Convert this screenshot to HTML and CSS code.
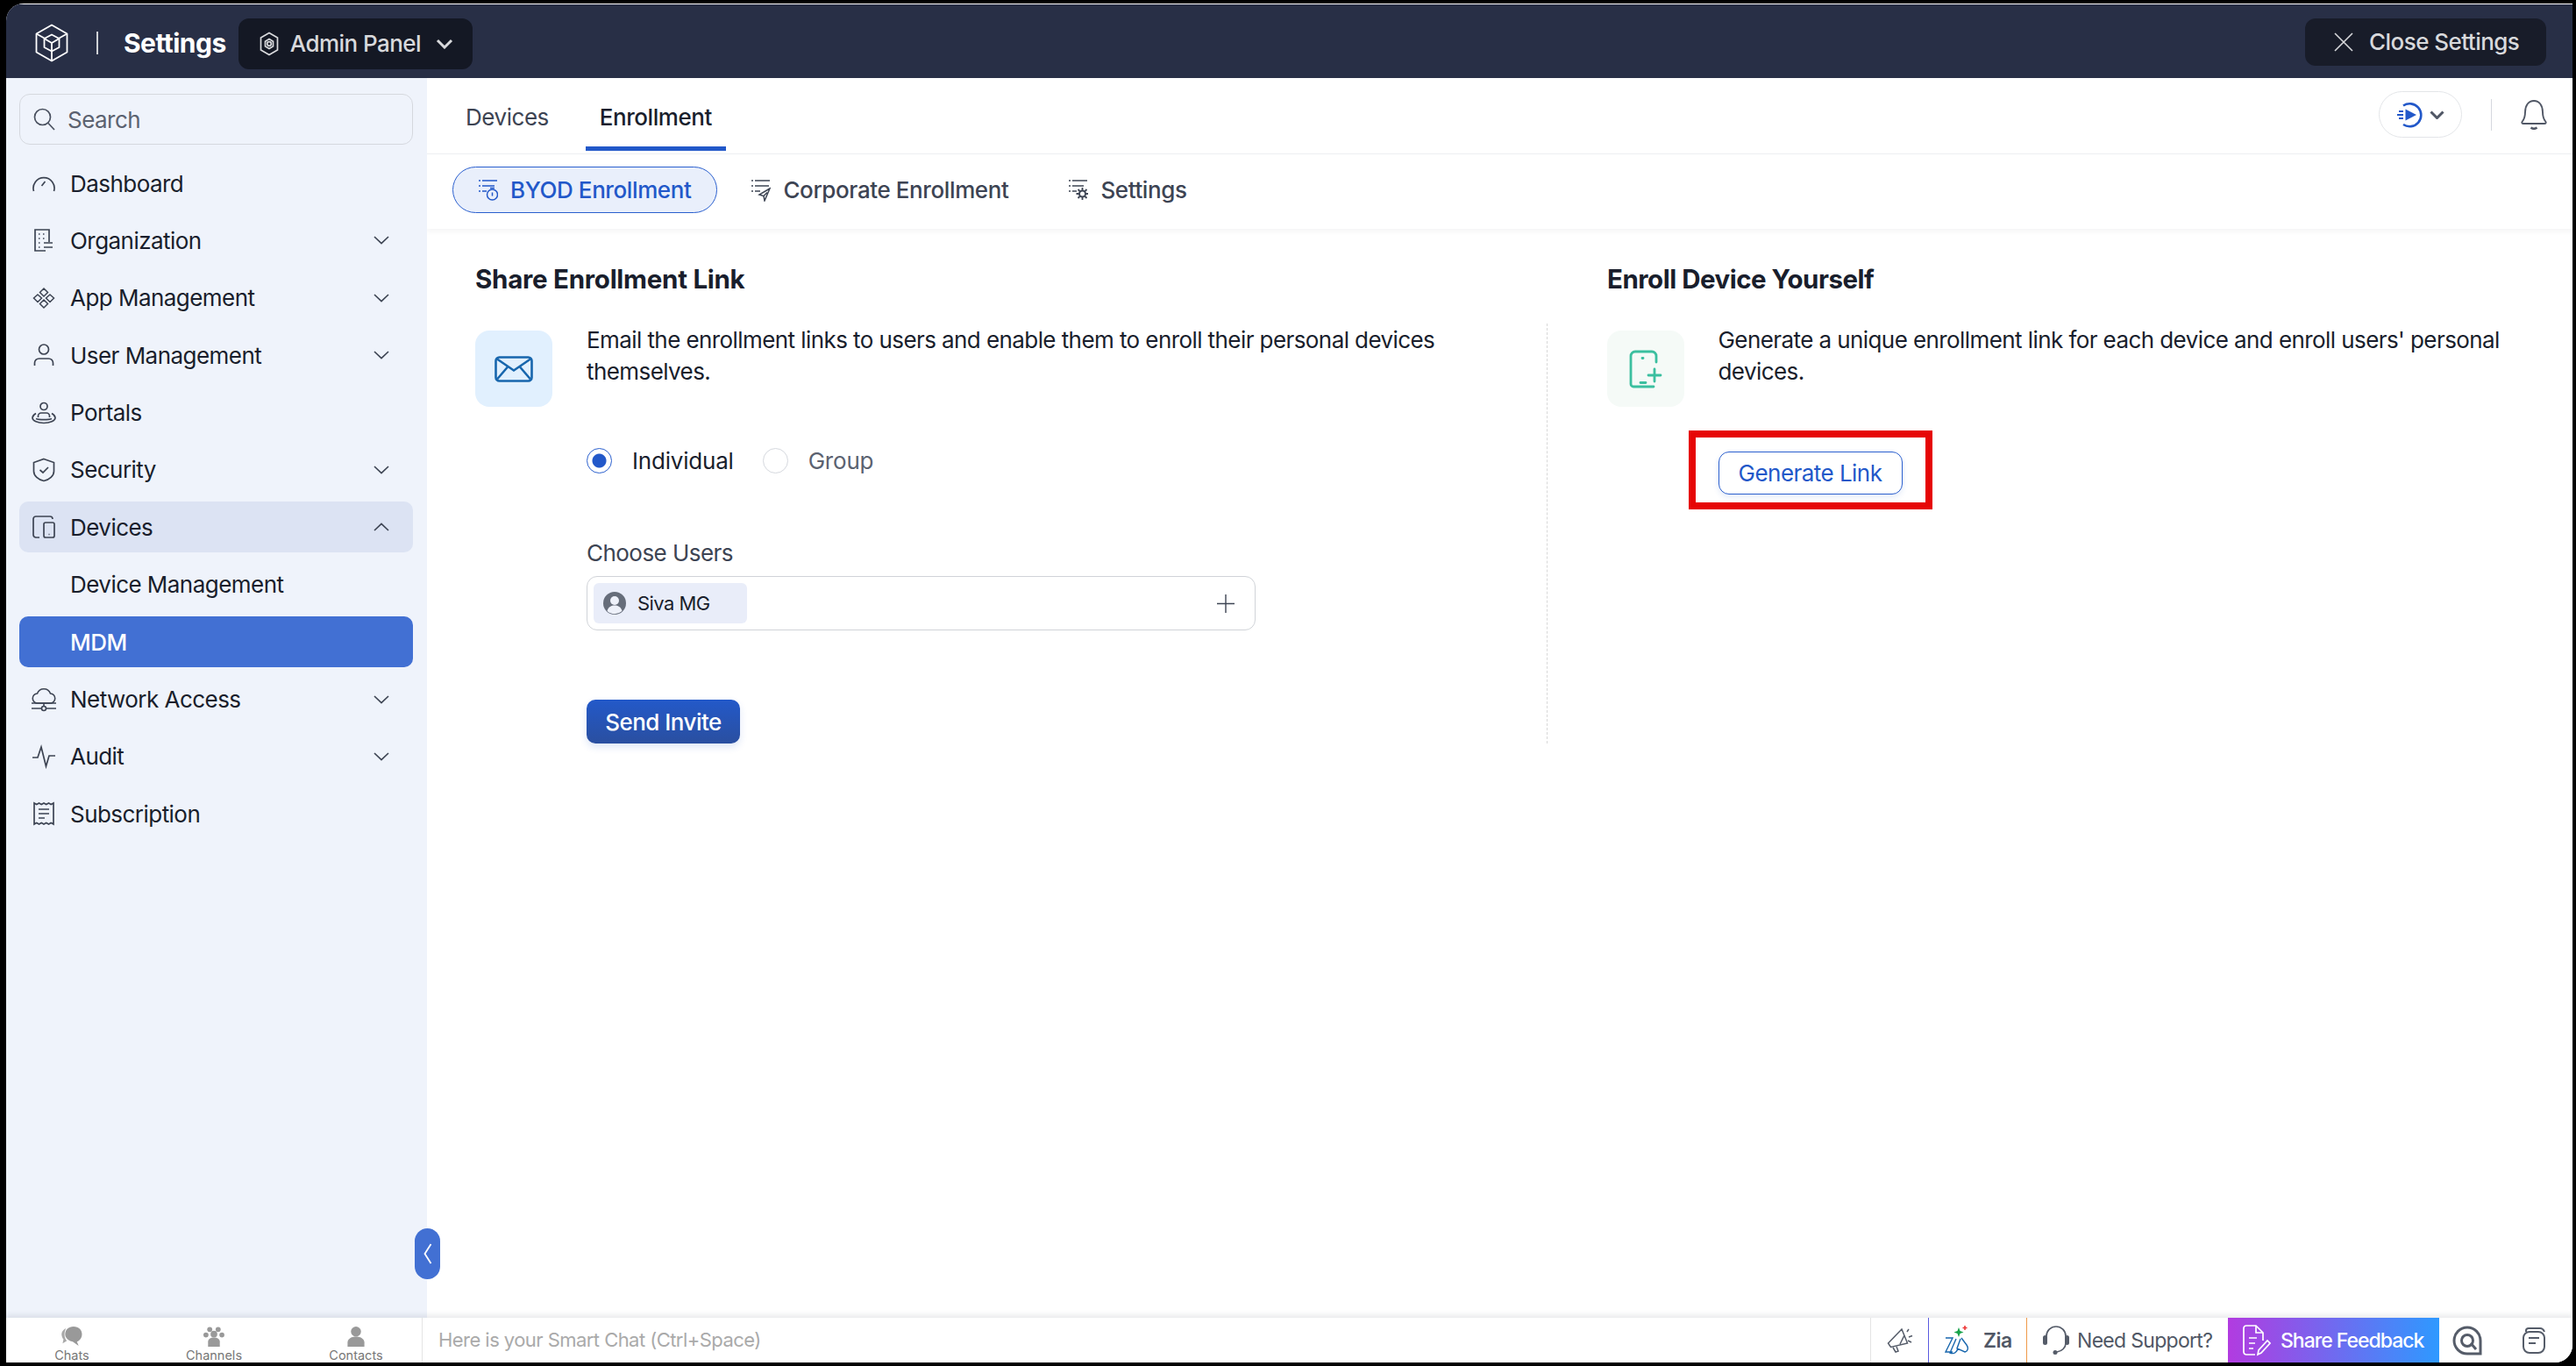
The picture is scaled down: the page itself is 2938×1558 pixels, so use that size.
FILE: index.html
```html
<!DOCTYPE html>
<html lang="en">
<head>
<meta charset="utf-8">
<title>Settings</title>
<link rel="stylesheet" href="styles.css">
</head>
<body>
<div class="window">
  <header class="topbar">
    <svg class="logo" viewBox="0 0 38 44" fill="none" stroke="#fff" stroke-width="1.8" stroke-linejoin="round"><path d="M19 1.5 36.5 11.5v21L19 42.5 1.5 32.5v-21z"/><path d="M1.5 11.5 10.500 16.500M36.500 11.500 27.500 16.500M19 31.500v11"/><path d="M19 12.500l8.500 4.500v10L19 31.500l-8.500-4.500V17z"/><path d="M10.500 17 19 22l8.500-5M19 22v9.500"/></svg>
    <span class="topbar-sep"></span>
    <span class="topbar-title">Settings</span>
    <button class="admin-chip">
      <svg class="admin-icon" viewBox="0 0 22 28" fill="none" stroke="#d8d9dc" stroke-width="1.7"><path d="M11 1.500 20.500 7v14L11 26.500 1.500 21V7z"/><circle cx="11" cy="14" r="2.300"/><path d="M11 8.500l4.500 2.700v5.600L11 19.500l-4.500-2.700v-5.600z"/></svg>
      <span>Admin Panel</span>
      <svg class="admin-chevron" viewBox="0 0 20 12" fill="none" stroke="#d8d9dc" stroke-width="3"><path d="M2 2l8 8 8-8"/></svg>
    </button>
    <button class="close-btn">
      <svg class="close-icon" viewBox="0 0 22 22" fill="none" stroke="#d8d9dc" stroke-width="1.600"><path d="M1 1l20 20M21 1 1 21"/></svg>
      <span>Close Settings</span>
    </button>
  </header>

  <div class="middle">
    <aside class="sidebar">
      <div class="search">
        <svg class="search-icon" viewBox="0 0 25 26" fill="none" stroke="#4a5160" stroke-width="1.700"><circle cx="10.500" cy="10.500" r="9"/><path d="M17 17.500l7 7.500"/></svg>
        <span>Search</span>
      </div>
      <nav class="nav">
        <a class="nav-item"><svg class="nav-icon" viewBox="0 0 28 28" fill="none" stroke="#3d4453" stroke-width="1.700"><path d="M2.500 23a12 12 0 1 1 23 0"/><path d="M11.500 17l4-5"/></svg><span>Dashboard</span></a>
        <a class="nav-item"><svg class="nav-icon" viewBox="0 0 28 28" fill="none" stroke="#3d4453" stroke-width="1.700"><path d="M16 26H4V2h16v14"/><path d="M8 7h1.500M13 7h1.500M8 12h1.500M13 12h1.500M8 17h1.500M8 22h1.500M14 17h10M14 22h10"/></svg><span>Organization</span><svg class="nav-chevron" viewBox="0 0 18 10" fill="none" stroke="#3d4453" stroke-width="1.700"><path d="M1 1l8 7.500L17 1"/></svg></a>
        <a class="nav-item"><svg class="nav-icon" viewBox="0 0 28 28" fill="none" stroke="#3d4453" stroke-width="1.500"><path d="M14 3l4.500 4.500L14 12 9.500 7.500zM7 10l4.500 4L7 18.500 2.500 14zM21 10l4.500 4-4.500 4.500-4.500-4.500zM14 16l4.500 4.500L14 25l-4.500-4.500z"/></svg><span>App Management</span><svg class="nav-chevron" viewBox="0 0 18 10" fill="none" stroke="#3d4453" stroke-width="1.700"><path d="M1 1l8 7.500L17 1"/></svg></a>
        <a class="nav-item"><svg class="nav-icon" viewBox="0 0 28 28" fill="none" stroke="#3d4453" stroke-width="1.700"><circle cx="14" cy="7.500" r="5.500"/><path d="M3.500 26v-3a5 5 0 0 1 5-5h11a5 5 0 0 1 5 5v3"/></svg><span>User Management</span><svg class="nav-chevron" viewBox="0 0 18 10" fill="none" stroke="#3d4453" stroke-width="1.700"><path d="M1 1l8 7.500L17 1"/></svg></a>
        <a class="nav-item"><svg class="nav-icon" viewBox="0 0 28 28" fill="none" stroke="#3d4453" stroke-width="1.700"><circle cx="14" cy="6.500" r="4"/><path d="M7.500 19v-1.500a3.500 3.500 0 0 1 3.500-3.500h6a3.500 3.500 0 0 1 3.500 3.500V19"/><path d="M5 14.500C2.500 16 1 17.500 1 19.500 1 23 7 25.500 14 25.500S27 23 27 19.500c0-2-1.500-3.500-4-5M5 20.500c3 1.500 15 1.500 18 0"/></svg><span>Portals</span></a>
        <a class="nav-item"><svg class="nav-icon" viewBox="0 0 28 28" fill="none" stroke="#3d4453" stroke-width="1.700"><path d="M14 1.500 25.500 5.500v10c0 5-5 9.500-11.500 11-6.500-1.500-11.500-6-11.500-11v-10z"/><path d="M9.500 14l3.500 3 6-6"/></svg><span>Security</span><svg class="nav-chevron" viewBox="0 0 18 10" fill="none" stroke="#3d4453" stroke-width="1.700"><path d="M1 1l8 7.500L17 1"/></svg></a>
        <a class="nav-item nav-open"><svg class="nav-icon" viewBox="0 0 28 28" fill="none" stroke="#3d4453" stroke-width="1.700"><path d="M9 26H5a3 3 0 0 1-3-3V5a3 3 0 0 1 3-3h16a3 3 0 0 1 3 3"/><rect x="14" y="9" width="12" height="17" rx="2"/><path d="M19.500 22.500h1"/></svg><span>Devices</span><svg class="nav-chevron" viewBox="0 0 18 10" fill="none" stroke="#3d4453" stroke-width="1.700"><path d="M1 9l8-7.500L17 9"/></svg></a>
        <a class="nav-item"><span class="nav-sub">Device Management</span></a>
        <a class="nav-item nav-active"><span class="nav-sub">MDM</span></a>
        <a class="nav-item"><svg class="nav-icon" viewBox="0 0 28 28" fill="none" stroke="#3d4453" stroke-width="1.600"><path d="M7 18a5.500 5.500 0 0 1-.5-11 8 8 0 0 1 15 0 5.500 5.500 0 0 1-.5 11z"/><path d="M14 18v4M0 18h28M0 24h11M17 24h11"/><circle cx="14" cy="24" r="2.500"/></svg><span>Network Access</span><svg class="nav-chevron" viewBox="0 0 18 10" fill="none" stroke="#3d4453" stroke-width="1.700"><path d="M1 1l8 7.500L17 1"/></svg></a>
        <a class="nav-item"><svg class="nav-icon" viewBox="0 0 28 28" fill="none" stroke="#3d4453" stroke-width="1.700"><path d="M1 15h6l4-12 5.500 22 3.500-12h7"/></svg><span>Audit</span><svg class="nav-chevron" viewBox="0 0 18 10" fill="none" stroke="#3d4453" stroke-width="1.700"><path d="M1 1l8 7.500L17 1"/></svg></a>
        <a class="nav-item"><svg class="nav-icon" viewBox="0 0 28 28" fill="none" stroke="#3d4453" stroke-width="1.700"><path d="M3 2v24l2.750-1.500 2.750 1.500 2.750-1.500L14 26l2.750-1.500 2.750 1.500 2.750-1.500L25 26V2l-2.750 1.500L19.500 2l-2.750 1.500L14 2l-2.750 1.500L8.500 2 5.750 3.500z"/><path d="M8 9h12M8 14h12M8 19h7"/></svg><span>Subscription</span></a>
      </nav>
      <button class="collapse"><svg viewBox="0 0 10 26" fill="none" stroke="#fff" stroke-width="1.800"><path d="M8.500 2 1.500 13l7 11"/></svg></button>
    </aside>

    <main class="main">
      <div class="tabs">
        <a class="tab">Devices</a>
        <a class="tab tab-active">Enrollment</a>
        <div class="tabs-right">
          <button class="play-pill">
            <svg class="play-icon" viewBox="0 0 30 30" fill="none" stroke="#2258c9" stroke-width="2.600"><path d="M8 4.500A13 13 0 1 1 8 26"/><path d="M10.500 8.500 23 15l-12.500 6.500z" fill="#2258c9" stroke="none"/><path d="M3 11h5M1 15h7M3 19h5" stroke-width="1.800"/></svg>
            <svg class="play-chevron" viewBox="0 0 17 10" fill="none" stroke="#505765" stroke-width="3"><path d="M1.500 1.500l7 7 7-7"/></svg>
          </button>
          <span class="tabs-sep"></span>
          <svg class="bell" viewBox="0 0 30 35" fill="none" stroke="#505765" stroke-width="1.900"><path d="M1.500 26c2.500-3 3.500-5 3.500-11C5 7 9 2 15 2s10 5 10 13c0 6 1 8 3.500 11 .5 1 0 2-1.500 2H3c-1.500 0-2-1-1.500-2z"/><path d="M11.500 32.500c2 1.500 5 1.500 7 0" stroke-width="2.500"/></svg>
        </div>
      </div>

      <div class="subtabs">
        <a class="subtab subtab-active">
          <svg class="subtab-icon" viewBox="0 0 22 26" fill="none" stroke="#2258c9" stroke-width="1.500"><path d="M4 2h17M4 8h14M4 14h5M0 2h2M0 8h2M0 14h2" /><circle cx="15.500" cy="18" r="6"/><path d="M15.500 15.500v4M13 10.500h5"/></svg>
          <span>BYOD Enrollment</span>
        </a>
        <a class="subtab">
          <svg class="subtab-icon" viewBox="0 0 22 26" fill="none" stroke="#3d4453" stroke-width="1.500"><path d="M4 2h17M4 8h16M4 14h6M0 2h2M0 8h2M0 14h2"/><path d="M21 11 9 18l5 1.500 1 5.500 6-14zM14 19.500l4-4"/></svg>
          <span>Corporate Enrollment</span>
        </a>
        <a class="subtab">
          <svg class="subtab-icon" viewBox="0 0 22 26" fill="none" stroke="#3d4453" stroke-width="1.500"><path d="M4 2h17M4 8h13M4 14h5M0 2h2M0 8h2M0 14h2"/><circle cx="15.500" cy="17" r="3.500" stroke-width="2"/><path d="M15.500 10v3M15.500 21v3M8.500 17h3M19.500 17h3M10.500 12l2 2M18.500 20l2 2M20.500 12l-2 2M12.500 20l-2 2" stroke-width="1.800"/></svg>
          <span>Settings</span>
        </a>
      </div>

      <div class="content">
        <h2 class="heading">Share Enrollment Link</h2>
        <h2 class="heading heading-right">Enroll Device Yourself</h2>

        <section class="panel">
          <div class="desc-row">
            <div class="tile tile-blue">
              <svg class="mail-icon" viewBox="0 0 44 30" fill="none" stroke="#1766ad" stroke-width="2.600"><rect x="1.500" y="1.500" width="41" height="27" rx="4"/><path d="M3 3.500l19 13 19-13M3 26.500l12-14M41 26.500l-12-14"/></svg>
            </div>
            <p class="desc">Email the enrollment links to users and enable them to enroll their personal devices themselves.</p>
          </div>
          <div class="form">
            <div class="radios">
              <label class="radio"><span class="radio-mark radio-on"></span><span class="radio-label-on">Individual</span></label>
              <label class="radio"><span class="radio-mark"></span><span class="radio-label-off">Group</span></label>
            </div>
            <div class="field-label">Choose Users</div>
            <div class="field">
              <span class="chip">
                <svg class="avatar" viewBox="0 0 26 26"><circle cx="13" cy="13" r="13" fill="#666d7a"/><circle cx="13" cy="10" r="5" fill="#eef1fa"/><path d="M4.500 22c1-5 5-6.500 8.500-6.500s7.500 1.500 8.500 6.500a13 13 0 0 1-17 0z" fill="#eef1fa"/></svg>
                <span>Siva MG</span>
              </span>
              <svg class="plus" viewBox="0 0 20 21" fill="none" stroke="#3d4453" stroke-width="1.400"><path d="M10 0v21M0 10.500h20"/></svg>
            </div>
            <button class="send-btn">Send Invite</button>
          </div>
        </section>

        <section class="panel panel-right">
          <div class="desc-row">
            <div class="tile tile-green">
              <svg class="phone-icon" viewBox="0 0 38 44" fill="none" stroke="#3bbf9f" stroke-width="2.800" stroke-linecap="round"><path d="M31 14V7a5 5 0 0 0-5-5H7a5 5 0 0 0-5 5v32a3 3 0 0 0 3 3h23"/><path d="M15 9.500h1M13 37.500h6M29 22v14M22 29h14"/></svg>
            </div>
            <p class="desc">Generate a unique enrollment link for each device and enroll users' personal devices.</p>
          </div>
          <div class="form">
            <div class="generate-wrap">
              <button class="generate-btn">Generate Link</button>
              <span class="highlight"></span>
            </div>
          </div>
        </section>
      </div>
    </main>
  </div>

  <footer class="bottombar">
    <div class="bb-left">
      <a class="bb-item"><svg class="bb-icon" viewBox="0 0 26 24" fill="#999"><path d="M6 2C2 4 0 7 1 11c.5 3 2 4 2 4l-1 5 5-3c-3-3-4-9-1-15z" opacity=".85"/><path d="M15 0c6 0 10 4 10 9s-3 8-6 9l2 5-7-5C9 17 5 14 5 9s4-9 10-9z"/></svg><span>Chats</span></a>
      <a class="bb-item"><svg class="bb-icon" viewBox="0 0 26 24" fill="#999"><circle cx="8" cy="3.500" r="3"/><circle cx="18" cy="3.500" r="3"/><circle cx="3.500" cy="10" r="3"/><circle cx="22.500" cy="10" r="3"/><circle cx="13" cy="9" r="4"/><path d="M6 24v-6c0-3 3-5 7-5s7 2 7 5v6z"/></svg><span>Channels</span></a>
      <a class="bb-item"><svg class="bb-icon" viewBox="0 0 26 24" fill="#999"><circle cx="13" cy="6" r="6"/><path d="M3 24v-5c0-4 4-7 10-7s10 3 10 7v5z"/></svg><span>Contacts</span></a>
    </div>
    <div class="bb-input">Here is your Smart Chat (Ctrl+Space)</div>
    <div class="bb-right">
      <a class="bb-cell bb-mega"><svg class="mega-icon" viewBox="0 0 30 30" fill="none" stroke="#555c69" stroke-width="1.500"><path d="M17 2 1.500 18l3 4.500 19-4.500zM20 9l-5 10M7 23l3 5 3-1-2-5"/><path d="M23 5l2-3M25 11l4-1.500M24 15l4 2"/></svg></a>
      <a class="bb-cell bb-zia"><svg class="zia-icon" viewBox="0 0 28 34" fill="none"><path d="M1 14h8L1 30h8M13 15l-7 16c5 2 8-1 9-5M18 15l-4 11 9 4c4-1 4-5 2-8l-6-8" stroke="#1766ad" stroke-width="1.400"/><path d="M16 2l1.500 4 4 1.500-4 1.500-1.500 4-1.500-4-4-1.500 4-1.500z" fill="#17a34a"/><path d="M23 0v5M20.500 2.500h5" stroke="#e33" stroke-width="1.500"/></svg><span>Zia</span></a>
      <a class="bb-cell bb-support"><svg class="head-icon" viewBox="0 0 30 34" fill="none" stroke="#555c69" stroke-width="1.700"><path d="M4 15V12a11 11 0 0 1 22 0v3M26 20c0 5-4 9-10 10"/><rect x="0" y="11" width="5" height="11" rx="2.500" fill="#555c69" stroke="none"/><rect x="25" y="11" width="5" height="11" rx="2.500" fill="#555c69" stroke="none"/><circle cx="14" cy="30.500" r="2.500" fill="#555c69" stroke="none"/></svg><span>Need Support?</span></a>
      <a class="bb-cell bb-feedback"><svg class="fb-icon" viewBox="0 0 32 36" fill="none" stroke="#fff" stroke-width="1.700"><path d="M14 34H4a3 3 0 0 1-3-3V4a3 3 0 0 1 3-3h11l8 8v9"/><path d="M15 1v8h8M7 15h9M7 21h7M7 27h5"/><path d="M17 34l1-5 10-11 3 3-10 11z"/></svg><span>Share Feedback</span></a>
      <a class="bb-cell bb-at"><svg class="at-icon" viewBox="0 0 34 34" fill="none" stroke="#555c69" stroke-width="3"><path d="M32 32H17a15 15 0 1 1 15-15z"/><circle cx="17" cy="17" r="6.500"/><path d="M21 20l6 7"/></svg></a>
      <a class="bb-cell bb-notes"><svg class="note-icon" viewBox="0 0 28 30" fill="none" stroke="#555c69" stroke-width="2"><path d="M5 5V3.500C5 2 6 1 8 1h13c3 0 4 1.500 5 4"/><rect x="2" y="5" width="24" height="24" rx="7"/><path d="M8 12h12M8 18h8" stroke-width="2.200"/></svg></a>
    </div>
  </footer>
</div>
</body>
</html>
```

FILE: styles.css
```css
* { box-sizing: border-box; }
html, body { height: 100%; margin: 0; }
body {
  background: #000;
  padding: 4px 4px 4px 7px;
  font-family: Inter, "Noto Sans", "Liberation Sans", sans-serif;
  font-size: 26px;
  color: #191e2c;
  letter-spacing: -0.54px;
}
button { font: inherit; letter-spacing: inherit; cursor: pointer; }
a { color: inherit; text-decoration: none; }
p, h2 { margin: 0; }

.window {
  height: 100%;
  display: grid;
  grid-template-rows: 85px 1fr 51px;
  background: #fff;
  border-radius: 20px 0 20px 0;
  overflow: hidden;
}

/* top bar */
.topbar {
  display: flex;
  align-items: center;
  background: #282f46;
  border-top: 1px solid #fff;
  padding: 4px 30px 0 33px;
}
.logo { width: 38px; height: 44px; }
.topbar-sep { width: 2px; height: 26px; background: #cfd1d6; margin-left: 32px; }
.topbar-title { margin-left: 29px; font-size: 30px; font-weight: 700; color: #fff; }
.admin-chip {
  display: flex;
  align-items: center;
  height: 58px;
  width: 267px;
  margin-left: 14px;
  margin-top: 1px;
  padding: 0 0 0 24px;
  background: #141824;
  border: 0;
  border-radius: 12px;
  color: #d8d9dc;
  font-weight: 500;
}
.admin-icon { width: 22px; height: 28px; }
.admin-chip span { margin-left: 13px; }
.admin-chevron { width: 20px; height: 12px; margin-left: 17px; }
.close-btn {
  display: flex;
  align-items: center;
  height: 54px;
  width: 275px;
  margin-left: auto;
  margin-top: -3px;
  padding: 0 0 0 33px;
  background: #181c29;
  border: 0;
  border-radius: 12px;
  color: #d8d9dc;
  font-weight: 500;
}
.close-icon { width: 22px; height: 22px; }
.close-btn span { margin-left: 18px; }

.middle { display: flex; min-height: 0; }

/* sidebar */
.sidebar {
  position: relative;
  flex: 0 0 480px;
  background: #eff3fb;
  padding: 18px 16px 0 15px;
}
.search {
  display: flex;
  align-items: center;
  height: 58px;
  padding-left: 15px;
  border: 1.500px solid #d5d8de;
  border-radius: 12px;
  color: #5b6270;
}
.search-icon { width: 25px; height: 26px; }
.search span { margin-left: 14px; }
.nav { display: flex; flex-direction: column; gap: 7.400px; margin-top: 15px; }
.nav-item {
  display: flex;
  align-items: center;
  height: 58px;
  padding-left: 14px;
  padding-right: 27px;
  border-radius: 10px;
  color: #191e2c;
}
.nav-icon { width: 28px; height: 28px; flex: none; margin-right: 16px; }
.nav-sub { margin-left: 44px; }
.nav-chevron { width: 18px; height: 10px; margin-left: auto; }
.nav-open { background: #dce3f3; }
.nav-active { background: #4270d3; color: #fff; font-weight: 500; }
.collapse {
  position: absolute;
  right: -15px;
  bottom: 44px;
  z-index: 3;
  display: flex;
  align-items: center;
  justify-content: center;
  width: 29px;
  height: 58px;
  padding: 0;
  border: 0;
  border-radius: 15px;
  background: #4270d3;
}
.collapse svg { width: 10px; height: 26px; }

/* main */
.main { flex: 1; min-width: 0; display: flex; flex-direction: column; }
.tabs {
  display: flex;
  align-items: flex-end;
  height: 87px;
  padding: 0 29px 3px 28px;
  border-bottom: 1.500px solid #eef0f2;
}
.tab {
  height: 83px;
  padding: 27px 16px 0;
  margin-right: 26px;
  border-bottom: 5px solid transparent;
  color: #3d4453;
  line-height: 36px;
  letter-spacing: -0.46px;
}
.tab-active { color: #191e2c; font-weight: 500; border-bottom-color: #2258c9; }
.tabs-right { display: flex; align-items: center; margin-left: auto; align-self: flex-start; padding-top: 15px; }
.play-pill {
  display: flex;
  align-items: center;
  width: 95px;
  height: 53px;
  padding: 0 0 0 19px;
  background: #fff;
  border: 1.500px solid #e3e5e8;
  border-radius: 27px;
}
.play-icon { width: 30px; height: 30px; }
.play-chevron { width: 17px; height: 10px; margin-left: 8px; }
.tabs-sep { width: 1.500px; height: 36px; background: #d5d8de; margin-left: 33px; margin-right: 33px; }
.bell { width: 30px; height: 35px; }

.subtabs {
  display: flex;
  gap: 9px;
  height: 85px;
  padding: 14px 29px 0;
  box-shadow: 0 3px 6px rgba(30, 40, 60, 0.05);
}
.subtab {
  display: flex;
  align-items: center;
  gap: 14px;
  height: 53px;
  padding: 0 29px;
  border-radius: 27px;
  border: 1.500px solid transparent;
  color: #3d4453;
  font-weight: 500;
  letter-spacing: -0.4px;
}
.subtab-active { background: #e9effb; border-color: #2a5fce; color: #2258c9; }
.subtab-icon { width: 22px; height: 26px; flex: none; }

.content {
  display: grid;
  grid-template-columns: 1222px 1fr;
  grid-template-rows: auto auto;
  padding: 40px 0 0 55px;
}
.heading { font-size: 29.500px; font-weight: 700; line-height: 34px; margin-bottom: 34px; color: #191e2c; letter-spacing: -0.27px; }
.heading-right { padding-left: 69px; letter-spacing: -0.5px; }
.panel { padding-top: 1px; padding-bottom: 0; }
.panel-right { border-left: 1.500px dashed #d8d8d8; padding-left: 67.500px; }
.desc-row { display: flex; align-items: flex-start; gap: 39px; }
.tile {
  display: flex;
  align-items: center;
  justify-content: center;
  flex: none;
  width: 88px;
  height: 87px;
  margin-top: 7px;
  border-radius: 16px;
}
.tile-blue { background: #e1f0fe; }
.tile-green { background: #f5faf7; }
.mail-icon { width: 44px; height: 30px; }
.phone-icon { width: 38px; height: 44px; }
.desc { max-width: 1040px; line-height: 36px; color: #191e2c; letter-spacing: -0.58px; }
.panel-right .desc { max-width: 940px; }

.form { padding-left: 127px; }
.radios { display: flex; gap: 33px; margin-top: 47px; }
.radio { display: flex; align-items: center; gap: 23px; height: 29px; letter-spacing: -0.2px; }
.radio-mark {
  width: 29px;
  height: 29px;
  border: 1.500px solid #d5d8de;
  border-radius: 50%;
  background: #fff;
}
.radio-on {
  border-color: #2a5fce;
  background: radial-gradient(circle, #2258c9 0 7.500px, #fff 8.500px);
}
.radio-label-on { color: #191e2c; }
.radio-label-off { color: #5b6270; }
.field-label { margin-top: 75px; line-height: 32px; color: #3d4453; }
.field {
  display: flex;
  align-items: center;
  width: 763px;
  height: 62px;
  margin-top: 10px;
  padding: 0 23px 0 7px;
  border: 1.500px solid #d0d3d8;
  border-radius: 12px;
}
.chip {
  display: flex;
  align-items: center;
  gap: 13px;
  width: 175px;
  height: 46px;
  padding-left: 11px;
  background: #e9edf9;
  border-radius: 6px;
  font-size: 22px;
}
.avatar { width: 26px; height: 26px; }
.plus { width: 20px; height: 21px; margin-left: auto; }
.send-btn {
  display: block;
  width: 175px;
  height: 50px;
  margin-top: 79px;
  padding: 0;
  border: 0;
  border-radius: 10px;
  background: linear-gradient(#2359c9, #2a4fa0);
  color: #fff;
  font-weight: 500;
  box-shadow: 0 4px 8px rgba(34, 88, 201, 0.15);
}
.generate-wrap { position: relative; width: 210px; margin-top: 51px; }
.generate-btn {
  display: block;
  width: 210px;
  height: 49px;
  padding: 0;
  background: #fff;
  border: 1.500px solid #2a5fce;
  border-radius: 12px;
  color: #2258c9;
  box-shadow: 0 3px 6px rgba(34, 88, 201, 0.12);
}
.highlight {
  position: absolute;
  inset: -24px -34px -17px;
  border: 8px solid #e60606;
  pointer-events: none;
}

/* bottom bar */
.bottombar {
  position: relative;
  z-index: 2;
  display: flex;
  align-items: stretch;
  background: #fff;
  box-shadow: 0 -3px 6px rgba(30, 40, 60, 0.1);
}
.bb-left {
  display: flex;
  gap: 12px;
  flex: 0 0 474px;
  border-right: 1.500px solid #e4e4e4;
}
.bb-item {
  display: flex;
  flex: 0 0 150px;
  flex-direction: column;
  align-items: center;
  font-size: 14.500px;
  letter-spacing: 0;
  line-height: 16px;
  color: #777;
  padding-top: 10px;
}
.bb-icon { width: 26px; height: 23px; margin-bottom: 2px; }
.bb-input { flex: 1; padding-left: 18px; line-height: 51px; font-size: 22px; letter-spacing: -0.55px; color: #aaa; }
.bb-right { display: flex; align-items: stretch; }
.bb-cell { display: flex; align-items: center; color: #505765; }
.bb-mega { width: 67px; padding-left: 18px; border-left: 1.500px solid #e4e4e4; border-right: 1.500px solid #5b5be0; }
.mega-icon { width: 30px; height: 30px; }
.bb-zia { width: 112px; padding-left: 18px; border-right: 1.500px solid #ef9a4a; font-weight: 600; font-size: 23px; }
.zia-icon { width: 28px; height: 34px; }
.bb-zia span { margin-left: 16px; }
.bb-support { width: 229px; padding-left: 18px; font-size: 23px; letter-spacing: -0.7px; }
.head-icon { width: 30px; height: 34px; }
.bb-support span { margin-left: 9px; }
.bb-feedback {
  width: 241px;
  padding-left: 17px;
  background: linear-gradient(90deg, #b23be0, #2e99ff);
  color: #fff;
  font-size: 23px;
  font-weight: 500;
  letter-spacing: -1px;
}
.fb-icon { width: 32px; height: 36px; }
.bb-feedback span { margin-left: 11px; }
.bb-at { width: 79px; padding-left: 15px; }
.at-icon { width: 34px; height: 34px; }
.bb-notes { width: 73px; padding-left: 15px; }
.note-icon { width: 28px; height: 30px; }
```
